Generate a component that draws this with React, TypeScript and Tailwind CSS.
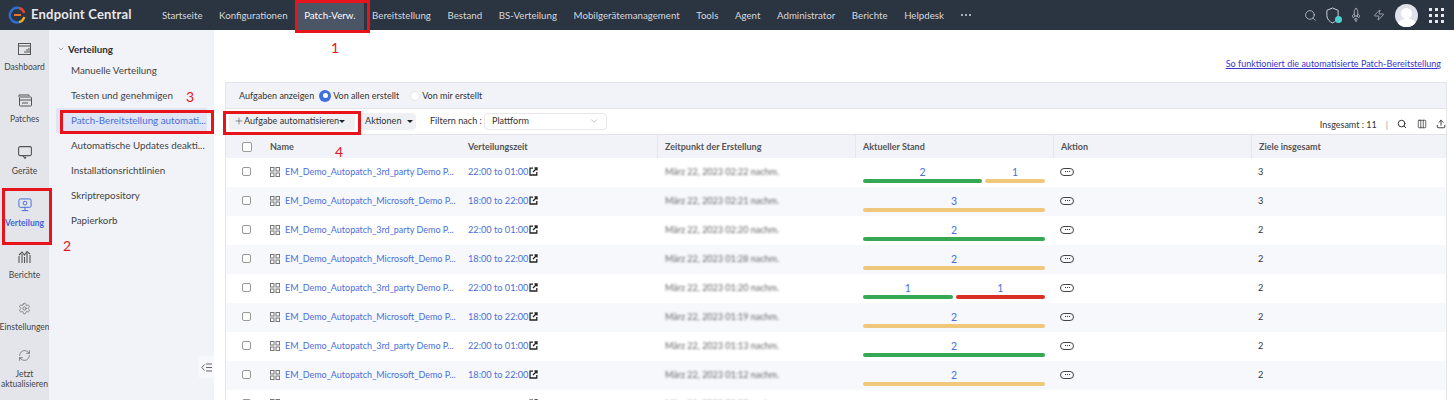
import { ChevronDown, Search, Rocket, Zap, Columns3, Upload, RefreshCw, Settings, Plus } from "lucide-react";

const navItems = ["Startseite", "Konfigurationen", "Patch-Verw.", "Bereitstellung", "Bestand", "BS-Verteilung", "Mobilgerätemanagement", "Tools", "Agent", "Administrator", "Berichte", "Helpdesk"];

const subItems = ["Manuelle Verteilung", "Testen und genehmigen", "Patch-Bereitstellung automati...", "Automatische Updates deakti...", "Installationsrichtlinien", "Skriptrepository", "Papierkorb"];

const rows = [
  { name: "EM_Demo_Autopatch_3rd_party Demo P...", time: "22:00 to 01:00", created: "März 22, 2023 02:22 nachm.", green: 2, yellow: 1, red: 0, total: 3 },
  { name: "EM_Demo_Autopatch_Microsoft_Demo P...", time: "18:00 to 22:00", created: "März 22, 2023 02:21 nachm.", green: 0, yellow: 3, red: 0, total: 3 },
  { name: "EM_Demo_Autopatch_3rd_party Demo P...", time: "22:00 to 01:00", created: "März 22, 2023 02:20 nachm.", green: 2, yellow: 0, red: 0, total: 2 },
  { name: "EM_Demo_Autopatch_Microsoft_Demo P...", time: "18:00 to 22:00", created: "März 22, 2023 01:28 nachm.", green: 0, yellow: 2, red: 0, total: 2 },
  { name: "EM_Demo_Autopatch_3rd_party Demo P...", time: "22:00 to 01:00", created: "März 22, 2023 01:20 nachm.", green: 1, yellow: 0, red: 1, total: 2 },
  { name: "EM_Demo_Autopatch_Microsoft_Demo P...", time: "18:00 to 22:00", created: "März 22, 2023 01:19 nachm.", green: 0, yellow: 2, red: 0, total: 2 },
  { name: "EM_Demo_Autopatch_3rd_party Demo P...", time: "22:00 to 01:00", created: "März 22, 2023 01:13 nachm.", green: 2, yellow: 0, red: 0, total: 2 },
  { name: "EM_Demo_Autopatch_Microsoft_Demo P...", time: "18:00 to 22:00", created: "März 22, 2023 01:12 nachm.", green: 0, yellow: 2, red: 0, total: 2 },
  { name: "EM_Demo_Autopatch_Adobe_Demo P...", time: "18:00 to 22:00", created: "März 21, 2023 03:20 nachm.", green: 1, yellow: 1, red: 0, total: 2 },
];

const gridCols = "grid grid-cols-[36px_198px_197px_198px_198px_198px_196px]";

const Logo = () => (
  <svg width="18" height="18" viewBox="0 0 18 18" fill="none" strokeWidth="2.400">
    <path d="M11 2A7.500 7.500 0 0 0 4 14.500" stroke="#2f6fd6" />
    <path d="M11 2A7.500 7.500 0 0 1 16.300 7" stroke="#e2452f" />
    <path d="M16.300 11A7.500 7.500 0 0 1 11 16.200" stroke="#f2b01e" />
    <path d="M4 14.500A7.500 7.500 0 0 0 11 16.200" stroke="#2f6fd6" />
    <path d="M6 9h7" stroke="#e8722a" strokeWidth="2" />
  </svg>
);

const Bar = ({ color, grow, value }: { color: string; grow: number; value: number }) => (
  <div className="flex flex-col items-center min-w-0" style={{ flexGrow: grow, flexBasis: 0 }}>
    <span className="text-[10.5px] leading-[14px] text-[#4a6fd8]">{value}</span>
    <div className={`h-[4px] w-full rounded-full ${color}`} />
  </div>
);

const RailItem = ({ label, icon, active, className = "" }: { label: React.ReactNode; icon: React.ReactNode; active?: boolean; className?: string }) => (
  <div className={`h-[52px] flex flex-col items-center pt-[10px] gap-[7px] text-[8.5px] leading-[10px] text-center whitespace-nowrap ${active ? "text-[#3f66d8] font-bold" : "text-[#444]"} ${className}`}>
    <div className="h-[13px] flex items-center justify-center">{icon}</div>
    <span>{label}</span>
  </div>
);

const App = () => {
  return (
    <div className="relative w-[1454px] h-[400px] overflow-hidden bg-white font-['Lato',sans-serif] text-[#333]">
      {/* Top bar */}
      <header className="h-[30px] bg-[#2b3441] flex items-center text-white">
        <div className="w-[153.700px] pl-[8px] flex items-center gap-[5px] shrink-0">
          <Logo />
          <span className="text-[13px] font-bold text-[#e8e8ea] tracking-[0.2px] whitespace-nowrap">Endpoint Central</span>
        </div>
        <nav className="flex items-center h-full text-[9.7px] text-[#d5d8de]">
          {navItems.map((item) => (
            <div key={item} className={`h-full flex items-center px-[8.3px] whitespace-nowrap ${item === "Patch-Verw." ? "bg-[#4a5565] text-white" : ""}`}>
              {item}
            </div>
          ))}
          <div className="ml-[9px] flex gap-[2px]">
            <span className="w-[2px] h-[2px] bg-[#d5d8de] rounded-full" />
            <span className="w-[2px] h-[2px] bg-[#d5d8de] rounded-full" />
            <span className="w-[2px] h-[2px] bg-[#d5d8de] rounded-full" />
          </div>
        </nav>
        <div className="ml-auto flex items-center text-[#d5d8de] pr-[10px]">
          <Search size={13} strokeWidth={1.3} />
          <div className="relative ml-[8px]">
            <svg width="15" height="17" viewBox="0 0 16 18" fill="none" stroke="currentColor" strokeWidth="1">
              <path d="M8 1l6 2.500V9c0 4-3 6.500-6 8-3-1.500-6-4-6-8V3.500z" />
            </svg>
            <span className="absolute right-[-2px] bottom-[1px] w-[7px] h-[7px] rounded-full bg-[#4fd0d0]" />
          </div>
          <Rocket size={12} strokeWidth={1.3} className="ml-[10px] -rotate-45" />
          <Zap size={12} strokeWidth={1.3} className="ml-[11px]" />
          <div className="ml-[10px] w-[23px] h-[23px] rounded-full bg-[#dfe2ea] overflow-hidden flex flex-col items-center pt-[4px]">
            <span className="w-[11px] h-[12px] rounded-full bg-white" />
            <span className="w-[20px] h-[8px] rounded-t-full bg-white" />
          </div>
          <div className="ml-[11px] grid grid-cols-3 gap-[3px]">
            {Array.from({ length: 9 }).map((_, i) => (
              <span key={i} className="w-[3px] h-[3px] bg-[#e5e7eb]" />
            ))}
          </div>
        </div>
      </header>

      <div className="flex h-[370px]">
        {/* Icon rail */}
        <aside className="w-[49px] shrink-0 bg-[#e4e5ea] flex flex-col pt-[2px]">
          <RailItem label="Dashboard" icon={
            <svg width="13" height="12" viewBox="0 0 13 12" fill="none" stroke="#555" strokeWidth="1"><rect x=".5" y=".5" width="12" height="11" /><path d="M.5 3h12M7 10V8M9 10V6M11 10V5" /></svg>
          } />
          <RailItem label="Patches" icon={
            <svg width="14" height="13" viewBox="0 0 14 13" fill="none" stroke="#555" strokeWidth="1"><path d="M1 3V1h10v1" /><rect x="1.500" y="3" width="12" height="9" rx="1" /><path d="M1.500 6h12M4 9h6" /></svg>
          } />
          <RailItem label="Geräte" icon={
            <svg width="14" height="13" viewBox="0 0 14 13" fill="none" stroke="#555" strokeWidth="1.100"><rect x=".6" y=".6" width="12.800" height="9" rx="1.500" /><path d="M5 9.600l2 2.900 1-1.800" /></svg>
          } />
          <RailItem active label="Verteilung" icon={
            <svg width="14" height="14" viewBox="0 0 15 15" fill="none" stroke="#3f66d8" strokeWidth="1"><rect x="1" y="1" width="13" height="9" rx="1.500" /><circle cx="7.500" cy="5.500" r="2" /><path d="M7.500 10v3M4 13.500h7" /></svg>
          } />
          <RailItem label="Berichte" icon={
            <svg width="13" height="13" viewBox="0 0 13 13" fill="none" stroke="#555" strokeWidth="1.100"><path d="M1 13V6M4 13V4M6.500 13V7M9 13V3M12 13V5M1 5l3-3 2.500 3L9 1.500 12 4" /></svg>
          } />
          <RailItem label="Einstellungen" icon={<Settings size={13} strokeWidth={1.2} color="#555" />} />
          <RailItem className="-mt-[5px]" label={<>Jetzt<br />aktualisieren</>} icon={<RefreshCw size={13} strokeWidth={1.2} color="#555" />} />
        </aside>

        {/* Sub navigation */}
        <aside className="relative w-[165px] shrink-0 bg-[#f2f3f8] pl-[7px] pt-[12px] text-[9.8px]">
          <div className="flex items-center gap-[3px] h-[14px] font-bold text-[#2f2f2f] ml-[1px]">
            <ChevronDown size={8} strokeWidth={1.2} />
            <span>Verteilung</span>
          </div>
          <ul className="mt-[2px]">
            {subItems.map((item, i) => (
              <li key={item} className={`h-[25px] pl-[15px] flex items-center mr-[7px] whitespace-nowrap ${i === 2 ? "bg-[#dfe5f5] text-[#4a6fd8]" : "text-[#444]"}`}>
                {item}
              </li>
            ))}
          </ul>
          <div className="absolute right-0 top-[326px] w-[16px] h-[22px] rounded-l bg-[#f7f8fb] flex items-center justify-center">
            <svg width="11" height="9" viewBox="0 0 11 9" fill="none" stroke="#666" strokeWidth="1"><path d="M3.500 1.500L.8 4.500l2.700 3M5 1h6M5 4.500h6M5 8h6" /></svg>
          </div>
        </aside>

        {/* Main content */}
        <main className="flex-1 min-w-0 pl-[11px] pr-[7px]">
          <div className="h-[52px] pt-[28px] pr-[6px] text-right">
            <a className="text-[9px] leading-[12px] text-[#3a35d0] underline block">So funktioniert die automatisierte Patch-Bereitstellung</a>
          </div>

          <div className="border-x border-[#e5e6ea]">
            <div className="h-[27px] bg-[#f2f3f8] border-y border-[#e4e5ea] flex items-center pl-[13px] text-[9px] text-[#333] whitespace-nowrap">
              <span>Aufgaben anzeigen</span>
              <span className="ml-[5px] w-[12px] h-[12px] rounded-full bg-[#3f6fe0] flex items-center justify-center">
                <span className="w-[5px] h-[5px] rounded-full bg-white" />
              </span>
              <span className="ml-[2px]">Von allen erstellt</span>
              <span className="ml-[11px] w-[10px] h-[10px] rounded-full bg-white border border-[#e8e8ec]" />
              <span className="ml-[2px]">Von mir erstellt</span>
            </div>

            <div className="h-[25px] flex items-center pl-[3px] pb-[1px] text-[9.100px] whitespace-nowrap">
              <div className="w-[126px] h-[17px] bg-[#eef0f3] rounded-sm flex items-center pl-[5px] text-[#333]">
                <Plus size={10} strokeWidth={1.2} className="shrink-0" />
                <span>Aufgabe automatisieren</span>
                <span className="w-0 h-0 border-x-[3px] border-x-transparent border-t-[3px] border-t-[#222]" />
              </div>
              <div className="ml-[5px] w-[56px] h-[17px] bg-[#eef0f3] rounded-sm flex items-center pl-[5px]">
                <span>Aktionen</span>
                <span className="ml-[6px] w-0 h-0 border-x-[3px] border-x-transparent border-t-[3px] border-t-[#222]" />
              </div>
              <span className="ml-[14px] w-[50px]">Filtern nach :</span>
              <div className="ml-[4px] w-[123px] h-[17px] bg-white border border-[#e8e8ec] rounded-sm flex items-center justify-between px-[7px]">
                <span>Plattform</span>
                <ChevronDown size={10} strokeWidth={1} color="#666" />
              </div>
              <div className="ml-auto self-end flex items-center pb-[2px] text-[9px]">
                <span>Insgesamt : 11</span>
                <span className="ml-[9px] text-[#999]">|</span>
                <Search size={10} strokeWidth={2.4} className="ml-[9px]" />
                <Columns3 size={10} strokeWidth={1.8} className="ml-[10px]" />
                <Upload size={10} strokeWidth={2.2} className="ml-[9px]" />
              </div>
            </div>

            <div className={`${gridCols} h-[24px] bg-[#f2f3f8] border-t border-[#e2e3e8] items-center text-[9px] font-bold text-[#555]`}>
              <div className="pl-[16px]"><span className="block w-[10px] h-[10px] border border-[#999] rounded-[2px] bg-white" /></div>
              <div className="pl-[8px]">Name</div>
              <div className="pl-[8px] h-full flex items-center">Verteilungszeit</div>
              <div className="pl-[7px] h-full flex items-center border-l border-[#e6e7ec]">Zeitpunkt der Erstellung</div>
              <div className="pl-[7px] h-full flex items-center border-l border-[#e6e7ec]">Aktueller Stand</div>
              <div className="pl-[7px] h-full flex items-center border-l border-[#e6e7ec]">Aktion</div>
              <div className="pl-[7px] h-full flex items-center border-l border-[#e6e7ec]">Ziele insgesamt</div>
            </div>

            {rows.map((row, i) => (
              <div key={i} className={`${gridCols} h-[29px] items-center text-[9.200px] ${i % 2 ? "bg-[#f7f8fc]" : "bg-white"}`}>
                <div className="pl-[16px] pb-[2px]"><span className="block w-[9px] h-[9px] border border-[#999] rounded-[2px] bg-white" /></div>
                <div className="flex items-center gap-[5px] pl-[8px] pb-[1px] text-[9px] text-[#4a6fd8] whitespace-nowrap">
                  <svg width="10" height="10" viewBox="0 0 10 10" fill="none" stroke="#777" strokeWidth="1" className="shrink-0"><rect x=".5" y=".5" width="3.500" height="3.500" /><rect x="6" y=".5" width="3.500" height="3.500" /><rect x=".5" y="6" width="3.500" height="3.500" /><rect x="6" y="6" width="3.500" height="3.500" /></svg>
                  <span>{row.name}</span>
                </div>
                <div className="flex items-center gap-[1px] pl-[8px] pb-[1px] text-[#4a6fd8] whitespace-nowrap">
                  <span>{row.time}</span>
                  <svg width="9" height="9" viewBox="0 0 9 9" fill="none" stroke="#222" strokeWidth="1.300"><path d="M4 1.200H1v6.800h6.800V5M4 5l4-4M5.500 1H8v2.500" /></svg>
                </div>
                <div className="pl-[8px] pb-[1px] text-[9px] text-[#666] blur-[1.3px] whitespace-nowrap">{row.created}</div>
                <div className="pl-[8px] pr-[8px] pt-[2px] flex gap-[3px]">
                  {row.green > 0 && <Bar color="bg-[#34a853]" grow={row.green} value={row.green} />}
                  {row.red > 0 && <Bar color="bg-[#d93025]" grow={row.red} value={row.red} />}
                  {row.yellow > 0 && <Bar color="bg-[#f0c87c]" grow={row.yellow} value={row.yellow} />}
                </div>
                <div className="pl-[7px] pb-[2px]">
                  <span className="w-[14px] h-[8px] border border-[#444] rounded-full flex items-center justify-center gap-[1px]">
                    <span className="w-[1px] h-[1px] bg-[#333]" /><span className="w-[1px] h-[1px] bg-[#333]" /><span className="w-[1px] h-[1px] bg-[#333]" />
                  </span>
                </div>
                <div className="pl-[7px] pb-[1px]">{row.total}</div>
              </div>
            ))}
          </div>
        </main>
      </div>

      {/* Red annotations drawn over the screenshot */}
      <div className="absolute left-[295px] top-0 w-[75px] h-[33px] border-[3px] border-[#e8141c]" />
      <div className="absolute left-[2px] top-[188px] w-[50px] h-[57px] border-[3px] border-[#e8141c]" />
      <div className="absolute left-[60px] top-[110px] w-[154px] h-[24px] border-[3px] border-[#e8141c]" />
      <div className="absolute left-[223px] top-[111px] w-[138px] h-[24px] border-[3px] border-[#e8141c]" />
      <span className="absolute left-[331px] top-[40px] text-[14px] leading-[16px] text-[#e8141c]">1</span>
      <span className="absolute left-[63px] top-[238px] text-[14px] leading-[16px] text-[#e8141c]">2</span>
      <span className="absolute left-[186px] top-[89px] text-[14px] leading-[16px] text-[#e8141c]">3</span>
      <span className="absolute left-[335px] top-[144px] text-[14px] leading-[16px] text-[#e8141c]">4</span>
    </div>
  );
};

export default App;
